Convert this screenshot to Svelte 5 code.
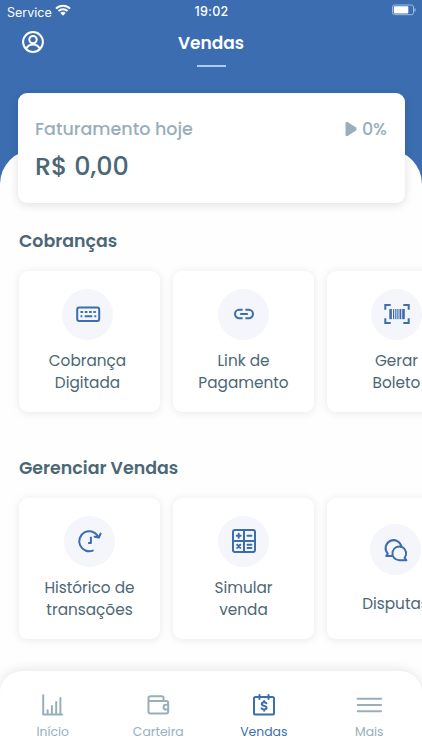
<script lang="ts">
  const sections = [
    {
      title: 'Cobranças',
      cards: [
        { icon: 'keyboard', lines: ['Cobrança', 'Digitada'] },
        { icon: 'link', lines: ['Link de', 'Pagamento'] },
        { icon: 'barcode', lines: ['Gerar', 'Boleto'] }
      ]
    },
    {
      title: 'Gerenciar Vendas',
      cards: [
        { icon: 'history', lines: ['Histórico de', 'transações'] },
        { icon: 'calculator', lines: ['Simular', 'venda'] },
        { icon: 'chat', lines: ['Disputas'] }
      ]
    }
  ];

  const tabs = [
    { icon: 'chart', label: 'Início' },
    { icon: 'wallet', label: 'Carteira' },
    { icon: 'sales', label: 'Vendas' },
    { icon: 'menu', label: 'Mais' }
  ];

  let active = $state('Vendas');
</script>

{#snippet glyph(name: string)}
  <svg class="icon" width="28" height="28" viewBox="0 0 28 28">
    {#if name === 'keyboard'}
      <rect x="3.2" y="7.5" width="22" height="13.4" rx="2" />
      <path d="M6.5 12h2.6m1.7 0h2.6m1.7 0h2.6m1.7 0h2.4M6.5 16.3h1.8m2.4 0h7.6m2.1 0h1.8" stroke-linecap="butt" />
    {:else if name === 'link'}
      <path d="M12.6 9.8H9.200a4.200 4.200 0 0 0 0 8.400h3.400M15.400 9.800h3.400a4.200 4.200 0 0 1 0 8.400h-3.400M10.200 14h7.600" stroke-linecap="butt" />
    {:else if name === 'barcode'}
      <path d="M2.3 9.700V4.900h5.400M20.300 4.900h5.400v4.800M25.700 18.300v4.800h-5.400M7.700 23.100H2.300v-4.800" stroke-linecap="butt" stroke-linejoin="miter" />
      <g class="solid">
        <rect x="6.300" y="9" width="2.600" height="10.200" />
        <rect x="10" y="9" width="1.200" height="10.200" />
        <rect x="12.200" y="9" width="1.200" height="10.200" />
        <rect x="14.300" y="9" width="1.200" height="10.200" />
        <rect x="16.500" y="9" width="1.800" height="10.200" />
        <rect x="19.200" y="9" width="2.600" height="10.200" />
      </g>
    {:else if name === 'history'}
      <path d="M16.800 23.600A10 10 0 1 1 21.700 8.900M18.600 9.800l4.300.8 1.700-4M14.900 10.600v5.300h-2" />
    {:else if name === 'calculator'}
      <rect x="3" y="3" width="22" height="22" rx="2" />
      <path d="M14 3v22M3 14h22" />
      <path d="M6.800 8.700h3.900M8.700 6.800v3.900M17.500 8.700h3.900M7.200 17.800l3.100 3.100m0-3.100l-3.100 3.100M17.500 17.800h3.900M17.500 21h3.900" />
    {:else if name === 'chat'}
      <path d="M10 20.100H4.200l1.600-2.400A8 8 0 1 1 19.500 11" />
      <path d="M22.600 21.800A6.900 6.900 0 1 0 17.300 24.300h7.100Z" />
    {:else if name === 'chart'}
      <path d="M4.200 4.200v19.300h19M8.600 23v-3.800M12.900 23v-8M17.200 23V11M21.400 23V7" />
    {:else if name === 'wallet'}
      <path d="M19.500 10V7a1.800 1.800 0 0 0-1.800-1.800H6.500a2 2 0 0 0-2 2v13.300a2 2 0 0 0 2 2h15.700a2 2 0 0 0 2-2V12a2 2 0 0 0-2-2H4.500" />
      <path d="M24 13.800h-2a2.400 2.400 0 0 0 0 4.800h2" />
    {:else if name === 'sales'}
      <rect x="4" y="6" width="20" height="17.500" rx="1.600" />
      <path d="M9.500 4v4M18.500 4v4" />
      <path d="M16.400 12.200c-.4-.6-1.200-.9-2.300-.9-1.400 0-2.300.6-2.300 1.700 0 2.600 4.800 1.200 4.800 3.800 0 1.100-1 1.700-2.500 1.700-1.200 0-2.100-.4-2.600-1.200M14.100 10v1.200M14.100 18.600v1.200" />
    {:else}
      <path d="M2.700 7.800h23.400M2.700 14h23.400M2.700 20.200h23.400" />
    {/if}
  </svg>
{/snippet}

<div class="screen">
  <header>
    <div class="status">
      <div class="carrier">
        <span>Service</span>
        <svg width="16" height="12" viewBox="0 0 16 12">
          <path d="M1 4.600a10 10 0 0 1 14 0M3.500 7a6.400 6.400 0 0 1 9 0" fill="none" stroke="#fff" stroke-width="2" />
          <path d="M5.400 9a3.700 3.700 0 0 1 5.200 0L8 11.700Z" fill="#fff" />
        </svg>
      </div>
      <span class="time">19:02</span>
      <svg class="battery" width="25" height="12" viewBox="0 0 25 12">
        <rect x="1.500" y="1" width="21" height="9.700" rx="2" fill="none" stroke="#a3bbdd" />
        <rect x="2.800" y="2.300" width="14.500" height="7.100" rx=".8" fill="#fff" />
        <path d="M24 4.400v3" stroke="#a3bbdd" stroke-width="1.200" />
      </svg>
    </div>
    <div class="title-bar">
      <svg class="profile" width="22" height="22" viewBox="0 0 22 22">
        <circle cx="11" cy="11" r="9.900" />
        <circle cx="11" cy="8.600" r="3.700" />
        <path d="M4 18c1.500-3.300 4-4.600 7-4.600s5.500 1.300 7 4.600" />
      </svg>
      <h1>Vendas</h1>
    </div>
    <div class="underline"></div>
  </header>

  <main>
    <div class="revenue">
      <div class="revenue-head">
        <span>Faturamento hoje</span>
        <span class="change">
          <svg width="12" height="16" viewBox="0 0 12 16">
            <path d="M1.500 2v12h1L10.500 8.600V7.400L2.500 2Z" fill="#98afbb" stroke="#98afbb" stroke-width="2" stroke-linejoin="round" />
          </svg>
          <span>0%</span>
        </span>
      </div>
      <strong>R$ 0,00</strong>
    </div>

    {#each sections as section}
      <section>
        <h2>{section.title}</h2>
        <div class="cards">
          {#each section.cards as card}
            <button class="card {card.icon}">
              <span class="bubble">{@render glyph(card.icon)}</span>
              <span class="label">
                {#each card.lines as line}
                  <span>{line}</span>
                {/each}
              </span>
            </button>
          {/each}
        </div>
      </section>
    {/each}
  </main>

  <nav>
    {#each tabs as tab}
      <button class="tab" class:active={active === tab.label} onclick={() => (active = tab.label)}>
        {@render glyph(tab.icon)}
        <span>{tab.label}</span>
      </button>
    {/each}
  </nav>
</div>

<style>
  :global(body) {
    margin: 0;
    overflow: hidden;
  }

  .screen {
    box-sizing: border-box;
    width: 422px;
    height: 750px;
    display: flex;
    flex-direction: column;
    overflow: hidden;
    background: linear-gradient(#3b6db0 300px, #fefefe 300px);
    font-family: Poppins, Inter, sans-serif;
    color: #4b6776;
  }

  header {
    height: 150px;
    flex: none;
    color: #fff;
  }

  .status {
    height: 22px;
    display: grid;
    grid-template-columns: 1fr auto 1fr;
    align-items: center;
    padding: 0 6px 0 7px;
    font-family: Inter, sans-serif;
    font-size: 12.5px;
  }

  .carrier {
    display: flex;
    align-items: center;
    gap: 3px;
    padding-top: 2px;
  }

  .carrier svg {
    margin-top: -4px;
  }

  .time {
    font-weight: 500;
    letter-spacing: 0.3px;
  }

  .battery {
    justify-self: end;
    margin-top: -2px;
  }

  .title-bar {
    display: grid;
    grid-template-columns: 1fr auto 1fr;
    align-items: center;
    height: 42px;
    padding: 0 22px;
  }

  .profile {
    fill: none;
    stroke: #fff;
    stroke-width: 2;
    margin-top: -2px;
  }

  h1 {
    margin: 0;
    font-size: 17px;
    font-weight: 600;
  }

  .underline {
    width: 29px;
    height: 2px;
    margin: 1px auto 0;
    background: #a9cdf7;
  }

  main {
    flex: 1;
    min-height: 0;
    background: #fefefe;
    border-radius: 34px 34px 0 0;
  }

  .revenue {
    box-sizing: border-box;
    height: 110px;
    margin: -57px 17px 0 18px;
    padding: 24px 18px 0 17px;
    border-radius: 9px;
    background: #fff;
    box-shadow: 0 2px 10px rgba(0, 0, 0, 0.12);
  }

  .revenue-head {
    display: flex;
    justify-content: space-between;
    align-items: center;
    height: 23px;
    font-size: 17.5px;
    font-weight: 500;
    color: #98afbb;
  }

  .change {
    display: flex;
    align-items: center;
    gap: 5px;
  }

  .revenue strong {
    display: block;
    margin-top: 8px;
    font-size: 25.4px;
    line-height: 36px;
    font-weight: 500;
  }

  section {
    margin-top: 25px;
    padding-left: 19px;
  }

  section + section {
    margin-top: 43px;
  }

  h2 {
    margin: 0 0 17px;
    font-size: 17.4px;
    line-height: 26px;
    font-weight: 600;
  }

  .cards {
    display: flex;
    gap: 13px;
  }

  .card {
    flex: none;
    width: 141px;
    height: 141px;
    box-sizing: border-box;
    display: flex;
    flex-direction: column;
    align-items: center;
    justify-content: center;
    gap: 10px;
    padding: 0;
    border: 0;
    border-radius: 9px;
    background: #fff;
    box-shadow: 0 1px 10px rgba(0, 0, 0, 0.09);
    font: inherit;
    font-size: 15.3px;
    line-height: 22.5px;
    color: inherit;
  }

  .keyboard {
    padding-right: 4px;
  }

  .barcode {
    padding-right: 2px;
  }

  .chat {
    gap: 18px;
    padding: 3px 4px 0 0;
  }

  .bubble {
    width: 51px;
    height: 51px;
    display: flex;
    align-items: center;
    justify-content: center;
    border-radius: 50%;
    background: #f4f6fb;
    color: #3b6db0;
  }

  .label {
    display: flex;
    flex-direction: column;
    align-items: center;
    white-space: nowrap;
  }

  .icon {
    fill: none;
    stroke: currentColor;
    stroke-width: 2;
    stroke-linecap: round;
    stroke-linejoin: round;
  }

  .solid {
    fill: currentColor;
    stroke: none;
  }

  nav {
    flex: none;
    box-sizing: border-box;
    position: relative;
    display: flex;
    height: 79px;
    padding-top: 20px;
    border-radius: 22px 22px 0 0;
    background: #fff;
    box-shadow: 0 -1px 12px rgba(0, 0, 0, 0.1);
  }

  .tab {
    flex: 1;
    display: flex;
    flex-direction: column;
    align-items: center;
    gap: 4px;
    padding: 0;
    border: 0;
    background: none;
    font: inherit;
    font-size: 12.4px;
    line-height: 18px;
    color: #98afbb;
  }

  .tab.active {
    color: #3b6db0;
  }
</style>
